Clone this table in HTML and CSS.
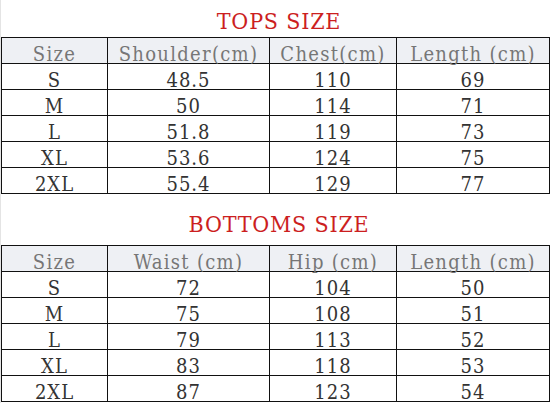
FILE: index.html
```html
<!DOCTYPE html>
<html>
<head>
<meta charset="utf-8">
<link rel="stylesheet" href="styles.css">
</head>
<body>
<div class="page">
  <div class="title title-top">TOPS SIZE</div>
  <div class="grid">
    <div class="cell head">Size</div><div class="cell head">Shoulder(cm)</div><div class="cell head">Chest(cm)</div><div class="cell head">Length (cm)</div>
    <div class="cell">S</div><div class="cell">48.5</div><div class="cell">110</div><div class="cell">69</div>
    <div class="cell">M</div><div class="cell">50</div><div class="cell">114</div><div class="cell">71</div>
    <div class="cell">L</div><div class="cell">51.8</div><div class="cell">119</div><div class="cell">73</div>
    <div class="cell">XL</div><div class="cell">53.6</div><div class="cell">124</div><div class="cell">75</div>
    <div class="cell">2XL</div><div class="cell">55.4</div><div class="cell">129</div><div class="cell">77</div>
  </div>
  <div class="title title-bottom">BOTTOMS SIZE</div>
  <div class="grid">
    <div class="cell head">Size</div><div class="cell head">Waist (cm)</div><div class="cell head">Hip (cm)</div><div class="cell head">Length (cm)</div>
    <div class="cell">S</div><div class="cell">72</div><div class="cell">104</div><div class="cell">50</div>
    <div class="cell">M</div><div class="cell">75</div><div class="cell">108</div><div class="cell">51</div>
    <div class="cell">L</div><div class="cell">79</div><div class="cell">113</div><div class="cell">52</div>
    <div class="cell">XL</div><div class="cell">83</div><div class="cell">118</div><div class="cell">53</div>
    <div class="cell">2XL</div><div class="cell">87</div><div class="cell">123</div><div class="cell">54</div>
  </div>
</div>
</body>
</html>
```
FILE: styles.css
```css
html, body {
  margin: 0;
  padding: 0;
  background: #ffffff;
}
body {
  font-family: "DejaVu Serif Condensed", "DejaVu Serif", serif;
  border-left: 1px solid #e4e4e4;
  width: 552px;
  height: 403px;
  overflow: hidden;
}
.page {
  display: flex;
  flex-direction: column;
}
.title {
  box-sizing: border-box;
  text-align: center;
  color: #cc1f1f;
  font-size: 23px;
  font-weight: 300;
  line-height: 32px;
  letter-spacing: 0.8px;
  padding-left: 4px;
}
.title-top {
  height: 37px;
  padding-top: 5px;
}
.title-bottom {
  height: 51px;
  padding-top: 14px;
}
.grid {
  display: grid;
  grid-template-columns: 106px 162px 127px 153px;
  border-left: 1px solid #111;
  border-top: 1px solid #111;
  width: 548px;
  background: #fff;
}
.cell {
  box-sizing: border-box;
  height: 26px;
  padding-top: 8px;
  border-right: 1px solid #111;
  border-bottom: 1px solid #111;
  text-align: center;
  font-size: 20px;
  line-height: 17px;
  color: #333;
  white-space: nowrap;
  letter-spacing: 1px;
}
.head {
  background: #eef0f4;
  color: #767676;
  letter-spacing: 1.3px;
}
```
